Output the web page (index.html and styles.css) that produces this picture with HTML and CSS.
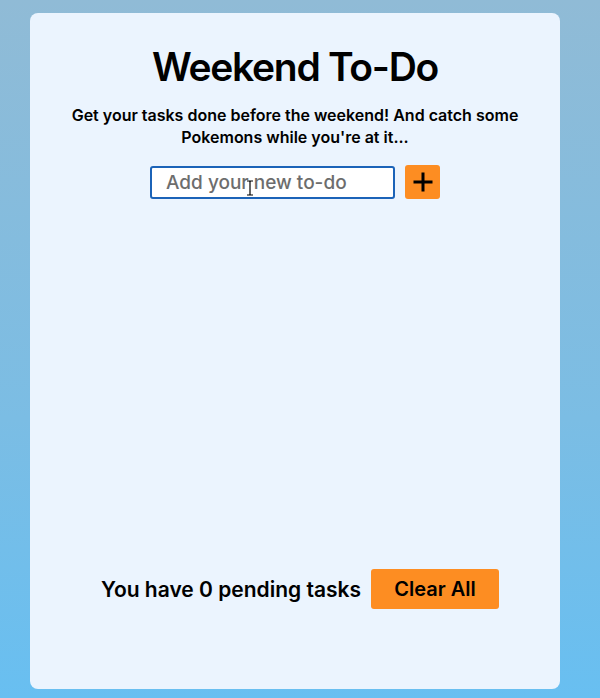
FILE: index.html
```html
<!DOCTYPE html>
<html lang="en">
<head>
<meta charset="utf-8">
<title>Weekend To-Do</title>
<link rel="stylesheet" href="styles.css">
</head>
<body>
<main class="card">
  <h1 class="title">Weekend To-Do</h1>
  <p class="subtitle">Get your tasks done before the weekend! And catch some Pokemons while you're at it...</p>
  <form class="add-row">
    <div class="input-wrap">
      <input class="todo-input" type="text" placeholder="Add your new to-do">
      <svg class="cursor" width="8" height="16" viewBox="0 0 8 16"><path d="M1 1h2.5L4 1.6 4.5 1H7M4 1.6V14.4M1 15h2.5L4 14.4 4.5 15H7" fill="none" stroke="#000" stroke-width="1.2"/></svg>
    </div>
    <button class="add-btn" type="button" aria-label="Add">
      <svg width="22" height="22" viewBox="0 0 22 22"><path d="M11 1.5v19M1.5 11h19" stroke="#000" stroke-width="3"/></svg>
    </button>
  </form>
  <ul class="list"></ul>
  <div class="footer">
    <span class="pending">You have 0 pending tasks</span>
    <button class="clear-btn" type="button">Clear All</button>
  </div>
</main>
</body>
</html>
```
FILE: styles.css
```css
html, body {
  margin: 0;
  height: 100%;
}
body {
  background: linear-gradient(180deg, #90bbd6 0%, #7bbde4 60%, #68bff1 100%);
  font-family: Inter, "Noto Sans", sans-serif;
  color: #000;
  padding: 13px 40px 9px 30px;
  box-sizing: border-box;
}
.card {
  background: #ebf4fe;
  border-radius: 8px;
  height: 676px;
  box-sizing: border-box;
  padding: 30px 24px 80px;
  display: flex;
  flex-direction: column;
  align-items: center;
}
.title {
  margin: 0;
  font-size: 39px;
  line-height: 48px;
  font-weight: 600;
  letter-spacing: -1.3px;
}
.subtitle {
  margin: 13px 0 0;
  font-size: 16px;
  line-height: 22px;
  font-weight: 600;
  text-align: center;
  max-width: 480px;
}
.add-row {
  margin-top: 17px;
  display: flex;
  align-items: center;
  gap: 10px;
}
.input-wrap {
  position: relative;
}
.todo-input {
  display: block;
  width: 245px;
  height: 33px;
  box-sizing: border-box;
  border: 2px solid #1b63b8;
  border-radius: 3px;
  background: #fff;
  padding: 0 14px;
  font-family: inherit;
  font-size: 19px;
  font-weight: 500;
  outline: none;
}
.todo-input::placeholder {
  color: #6d6d6d;
}
.cursor {
  position: absolute;
  left: 96px;
  top: 14px;
}
.add-btn {
  width: 35px;
  height: 34px;
  border: none;
  border-radius: 3px;
  background: #fd8d22;
  display: flex;
  align-items: center;
  justify-content: center;
  padding: 0;
}
.list {
  list-style: none;
  margin: 0;
  padding: 0;
  flex: 1;
}
.footer {
  display: flex;
  align-items: center;
  gap: 10px;
  margin-left: 10px;
}
.pending {
  font-size: 21px;
  font-weight: 600;
}
.clear-btn {
  height: 40px;
  width: 128px;
  border: none;
  border-radius: 3px;
  background: #fd8d22;
  font-family: inherit;
  font-size: 20px;
  font-weight: 600;
  color: #000;
}
```
